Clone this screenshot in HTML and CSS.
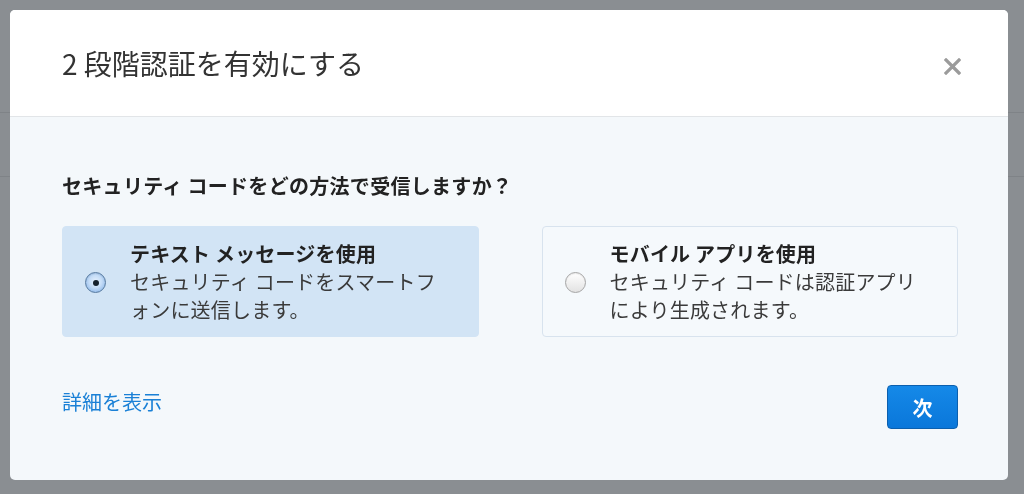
FILE: index.html
```html
<!DOCTYPE html>
<html lang="ja">
<head>
<meta charset="utf-8">
<title>2 段階認証を有効にする</title>
<link rel="stylesheet" href="styles.css">
</head>
<body>
<div class="page">
  <div class="page-bar"></div>
</div>
<div class="overlay">
  <div class="modal">
    <div class="modal-header">
      <h1 class="modal-title">2 段階認証を有効にする</h1>
      <button class="close" aria-label="閉じる">
        <svg width="17" height="17" viewBox="0 0 17 17"><path d="M2 2 L15 15 M15 2 L2 15" stroke="#9b9b9b" stroke-width="3.2" stroke-linecap="square" fill="none"/></svg>
      </button>
    </div>
    <div class="modal-body">
      <p class="question">セキュリティ コードをどの方法で受信しますか？</p>
      <div class="options">
        <label class="option selected">
          <span class="radio checked"><span class="dot"></span></span>
          <span class="option-text">
            <span class="option-title">テキスト メッセージを使用</span>
            <span class="option-desc">セキュリティ コードをスマートフォンに送信します。</span>
          </span>
        </label>
        <label class="option">
          <span class="radio"></span>
          <span class="option-text">
            <span class="option-title">モバイル アプリを使用</span>
            <span class="option-desc">セキュリティ コードは認証アプリにより生成されます。</span>
          </span>
        </label>
      </div>
      <div class="footer">
        <a class="details" href="#">詳細を表示</a>
        <button class="next">次</button>
      </div>
    </div>
  </div>
</div>
</body>
</html>
```
FILE: styles.css
```css
html, body {
  margin: 0;
  padding: 0;
}
body {
  width: 1024px;
  height: 494px;
  overflow: hidden;
  background: #8a8e92;
  font-family: "Noto Sans CJK JP", "Noto Sans", sans-serif;
  color: #333;
}
.page {
  padding-top: 112px;
}
.page-bar {
  height: 63px;
  border-top: 1px solid #7f8387;
  border-bottom: 1px solid #7f8387;
}
.overlay {
  position: fixed;
  inset: 0;
  padding: 10px 0 0 10px;
}
.modal {
  width: 998px;
  height: 470px;
  background: #f4f8fb;
  border-radius: 5px;
  overflow: hidden;
  display: flex;
  flex-direction: column;
}
.modal-header {
  height: 106px;
  background: #fff;
  border-bottom: 1px solid #e2e5e8;
  display: flex;
  align-items: center;
  justify-content: space-between;
  padding: 0 47px 0 52px;
}
.modal-title {
  margin: 0;
  font-size: 28px;
  font-weight: 400;
  color: #333;
  line-height: 36px;
}
.close {
  border: 0;
  background: none;
  padding: 0;
  width: 17px;
  height: 17px;
  display: flex;
  position: relative;
  top: 3px;
}
.modal-body {
  padding: 55px 50px 0 52px;
}
.question {
  margin: 0;
  font-size: 20px;
  line-height: 28px;
  font-weight: 700;
  color: #222;
  letter-spacing: 0.3px;
}
.options {
  margin-top: 26px;
  display: grid;
  grid-template-columns: 1fr 1fr;
  gap: 63px;
}
.option {
  height: 111px;
  box-sizing: border-box;
  display: flex;
  align-items: center;
  gap: 24px;
  padding: 0 30px 0 22px;
  border-radius: 4px;
  background: #f5f9fc;
  border: 1px solid #d8e3ee;
}
.option.selected {
  background: #d2e4f5;
  border-color: #d2e4f5;
}
.radio {
  flex: 0 0 auto;
  width: 21px;
  height: 21px;
  box-sizing: border-box;
  border-radius: 50%;
  border: 1px solid #a5a5a5;
  background: linear-gradient(#ffffff, #e2e2e2);
  box-shadow: inset 0 1px 1px rgba(0,0,0,0.08);
  display: flex;
  align-items: center;
  justify-content: center;
  position: relative;
  top: 1px;
}
.radio.checked {
  border: 1px solid #56799f;
  background: radial-gradient(circle at 50% 45%, #e6f1fd 0%, #c4dcf7 45%, #93bbea 80%, #7aa8e0 100%);
}
.dot {
  width: 6px;
  height: 6px;
  border-radius: 50%;
  background: #14202c;
}
.option-text {
  display: flex;
  flex-direction: column;
  font-size: 20px;
  line-height: 28px;
  letter-spacing: 0.2px;
}
.option-title {
  font-weight: 700;
  color: #222;
}
.option-desc {
  color: #3a3a3a;
}
.footer {
  margin-top: 48px;
  display: flex;
  justify-content: space-between;
  align-items: flex-start;
}
.details {
  margin-top: 3px;
  font-size: 20px;
  line-height: 28px;
  color: #1a80d6;
  text-decoration: none;
}
.next {
  width: 71px;
  height: 44px;
  box-sizing: border-box;
  border: 1px solid #0b5fae;
  border-radius: 4px;
  background: linear-gradient(#1589e8, #0a77da);
  color: #fff;
  font-family: "Noto Sans CJK JP", sans-serif;
  font-size: 20px;
  font-weight: 700;
  padding: 0;
}
```
